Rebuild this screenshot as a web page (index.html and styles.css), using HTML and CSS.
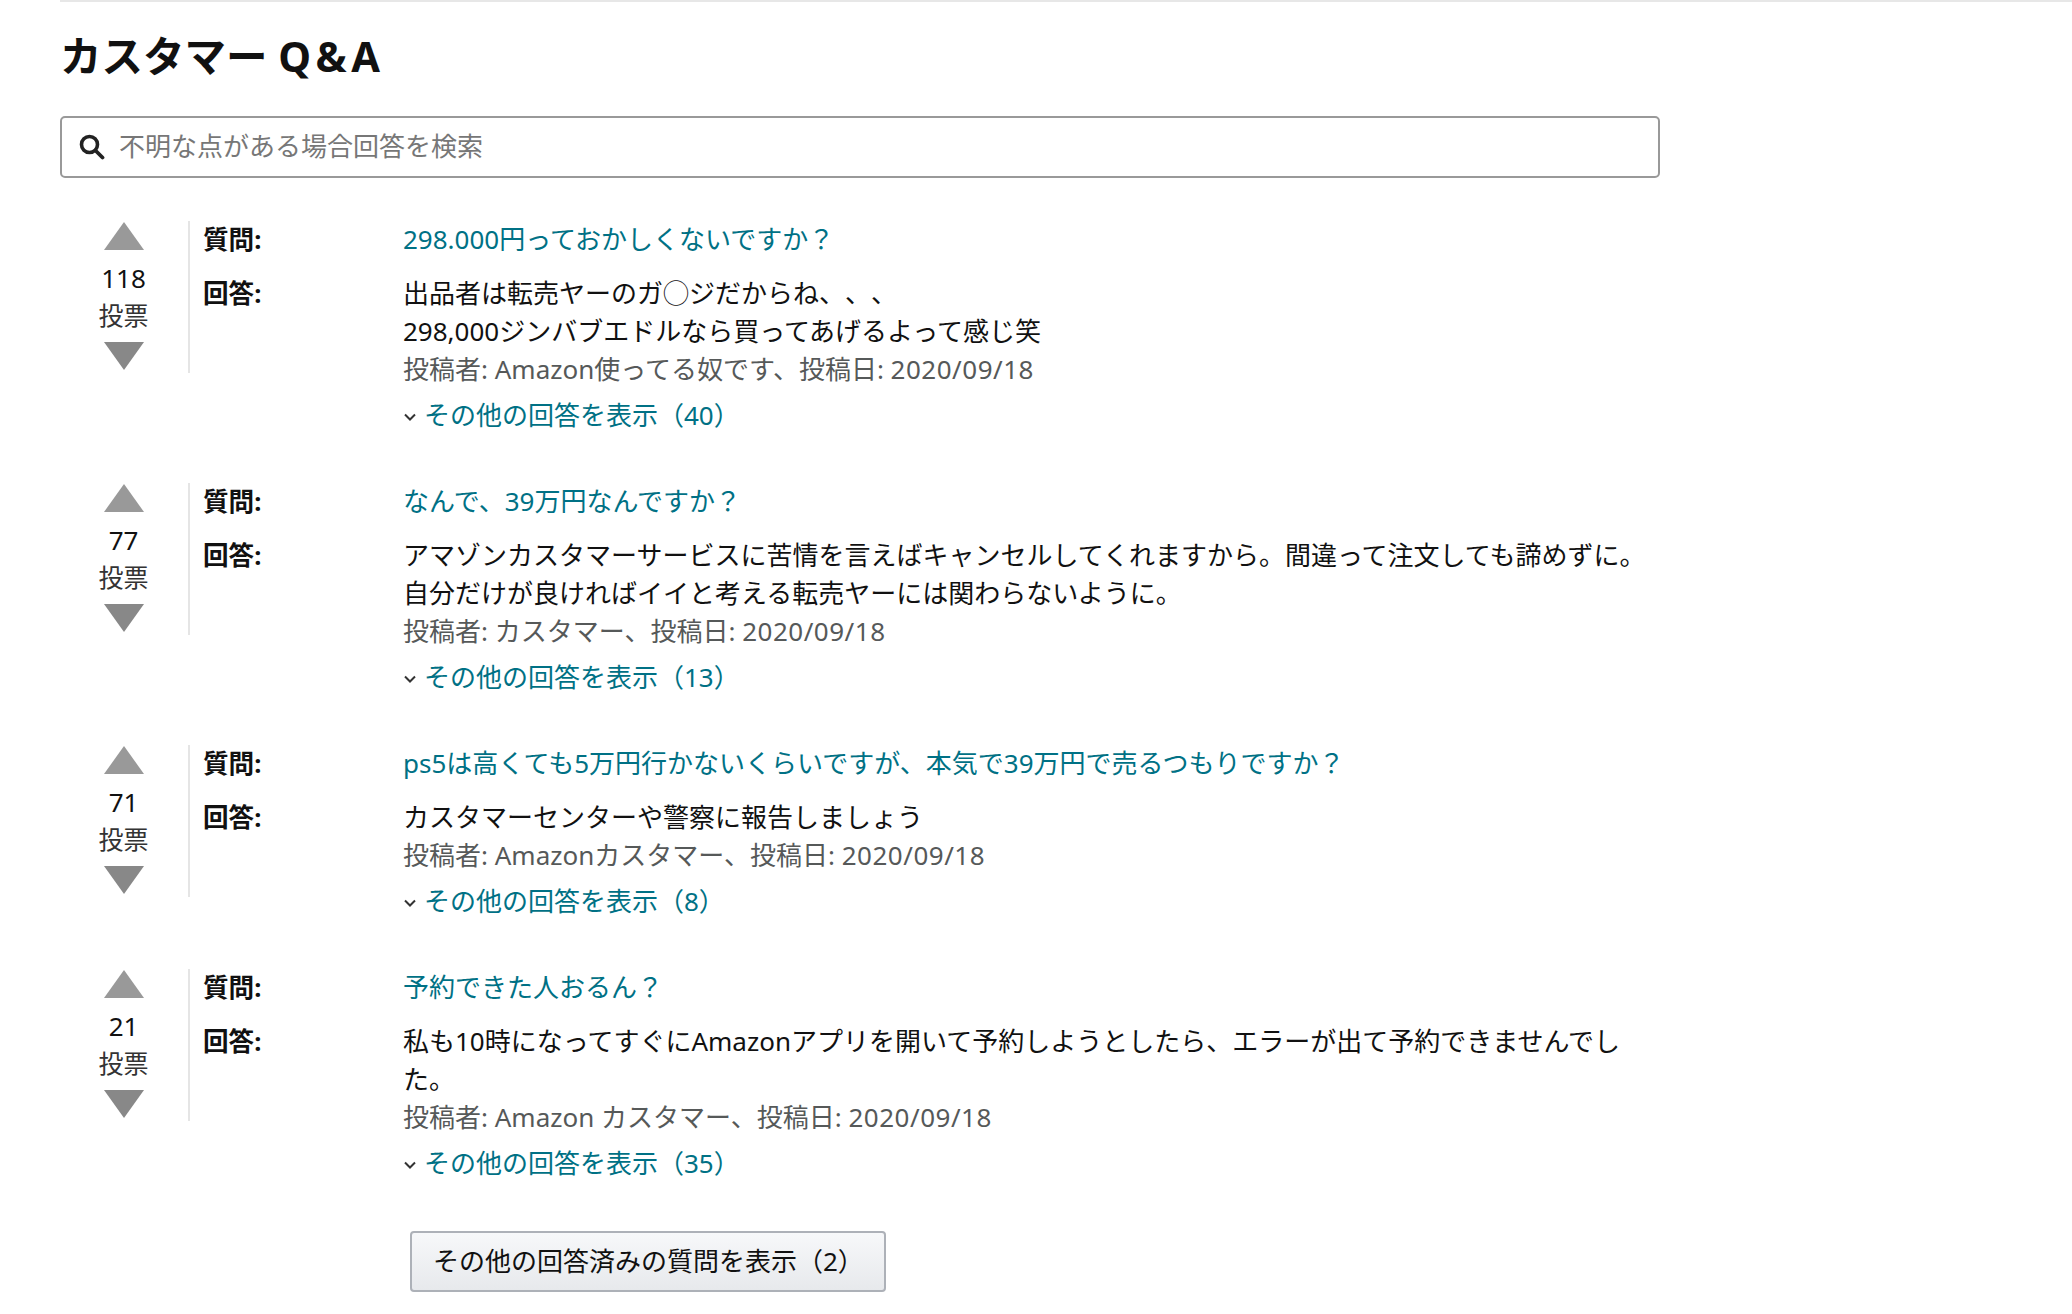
FILE: index.html
```html
<!DOCTYPE html>
<html lang="ja">
<head>
<meta charset="utf-8">
<title>カスタマー Q&amp;A</title>
<link rel="stylesheet" href="styles.css">
</head>
<body>
<main class="page">
  <h2 class="title">カスタマー <span class="title-latin">Q&amp;A</span></h2>
  <div class="search">
    <svg class="search-icon" viewBox="0 0 26 26" aria-hidden="true"><circle cx="10.5" cy="10.5" r="8" fill="none" stroke="#222" stroke-width="3.6"/><path d="M16.5 16.5l7 7" stroke="#222" stroke-width="3.8" stroke-linecap="round"/></svg>
    <span class="search-text">不明な点がある場合回答を検索</span>
  </div>
  <section class="qa">
    <div class="vote">
      <span class="tri up"></span><span class="count">118</span><span class="unit">投票</span><span class="tri down"></span>
    </div>
    <div class="body">
      <div class="line q"><b class="label">質問:</b><a class="link">298.000円っておかしくないですか？</a></div>
      <div class="line a"><b class="label">回答:</b><div class="answer">出品者は転売ヤーのガ◯ジだからね、、、<br>298,000ジンバブエドルなら買ってあげるよって感じ笑<div class="meta">投稿者: Amazon使ってる奴です、投稿日: <span class="date">2020/09/18</span></div><a class="link more"><svg class="chev" viewBox="0 0 14 10" aria-hidden="true"><path d="M2 2.5l5 5 5-5" fill="none" stroke="#333" stroke-width="2"/></svg>その他の回答を表示（40）</a></div></div>
    </div>
  </section>
  <section class="qa">
    <div class="vote">
      <span class="tri up"></span><span class="count">77</span><span class="unit">投票</span><span class="tri down"></span>
    </div>
    <div class="body">
      <div class="line q"><b class="label">質問:</b><a class="link">なんで、39万円なんですか？</a></div>
      <div class="line a"><b class="label">回答:</b><div class="answer">アマゾンカスタマーサービスに苦情を言えばキャンセルしてくれますから。間違って注文しても諦めずに。<br>自分だけが良ければイイと考える転売ヤーには関わらないように。<div class="meta">投稿者: カスタマー、投稿日: <span class="date">2020/09/18</span></div><a class="link more"><svg class="chev" viewBox="0 0 14 10" aria-hidden="true"><path d="M2 2.5l5 5 5-5" fill="none" stroke="#333" stroke-width="2"/></svg>その他の回答を表示（13）</a></div></div>
    </div>
  </section>
  <section class="qa">
    <div class="vote">
      <span class="tri up"></span><span class="count">71</span><span class="unit">投票</span><span class="tri down"></span>
    </div>
    <div class="body">
      <div class="line q"><b class="label">質問:</b><a class="link">ps5は高くても5万円行かないくらいですが、本気で39万円で売るつもりですか？</a></div>
      <div class="line a"><b class="label">回答:</b><div class="answer">カスタマーセンターや警察に報告しましょう<div class="meta">投稿者: Amazonカスタマー、投稿日: <span class="date">2020/09/18</span></div><a class="link more"><svg class="chev" viewBox="0 0 14 10" aria-hidden="true"><path d="M2 2.5l5 5 5-5" fill="none" stroke="#333" stroke-width="2"/></svg>その他の回答を表示（8）</a></div></div>
    </div>
  </section>
  <section class="qa">
    <div class="vote">
      <span class="tri up"></span><span class="count">21</span><span class="unit">投票</span><span class="tri down"></span>
    </div>
    <div class="body">
      <div class="line q"><b class="label">質問:</b><a class="link">予約できた人おるん？</a></div>
      <div class="line a"><b class="label">回答:</b><div class="answer">私も10時になってすぐにAmazonアプリを開いて予約しようとしたら、エラーが出て予約できませんでし<br>た。<div class="meta">投稿者: Amazon カスタマー、投稿日: <span class="date">2020/09/18</span></div><a class="link more"><svg class="chev" viewBox="0 0 14 10" aria-hidden="true"><path d="M2 2.5l5 5 5-5" fill="none" stroke="#333" stroke-width="2"/></svg>その他の回答を表示（35）</a></div></div>
    </div>
  </section>
  <button class="btn" type="button">その他の回答済みの質問を表示（2）</button>
</main>
</body>
</html>
```
FILE: styles.css
```css
* { box-sizing: border-box; }
html, body { margin: 0; background: #fff; }
body {
  font-family: "Noto Sans", "Noto Sans CJK JP", sans-serif;
  font-size: 26px;
  line-height: 38px;
  color: #111;
  text-spacing-trim: space-all;
}
.page {
  margin-left: 60px;
  height: 1314px;
  overflow: hidden;
  border-top: 2px solid #e7e7e7;
}
.title {
  margin: 0;
  padding-top: 24px;
  height: 114px;
  font-size: 41.5px;
  line-height: 60px;
  font-weight: 700;
}
.title-latin { letter-spacing: 4.5px; }
.search {
  display: flex;
  align-items: center;
  width: 1600px;
  height: 62px;
  margin-bottom: 43px;
  padding-left: 17px;
  border: 2px solid #999;
  border-radius: 5px;
}
.search-icon { width: 26px; height: 26px; flex: none; }
.search-text { margin: -2px 0 0 14px; color: #777; }
.qa { display: flex; align-items: flex-start; margin-bottom: 48px; }
.vote {
  display: flex;
  flex-direction: column;
  align-items: center;
  width: 130px;
  height: 152px;
  padding: 1px 1px 0 0;
  border-right: 2px solid #e5e5e5;
}
.tri { width: 0; height: 0; border-left: 20px solid transparent; border-right: 20px solid transparent; flex: none; }
.tri.up { border-bottom: 28px solid #999; }
.tri.down { border-top: 28px solid #888; }
.count, .unit { height: 38px; flex: none; }
.count { margin-top: 9px; }
.unit { margin-top: -1px; margin-bottom: 8px; color: #333; font-size: 25px; }
.body { margin-left: 13px; flex: 1; }
.line { display: flex; }
.line.a { margin-top: 16px; }
.label { width: 200px; flex: none; font-weight: 700; font-size: 25.6px; }
.link { color: #007185; }
.q .link { margin-top: -1px; }
.answer { flex: none; width: 1260px; margin: -1px 0 1px; }
.meta { color: #565959; }
.date { letter-spacing: 0.5px; }
.more { display: flex; align-items: center; margin-top: 8px; }
.chev { width: 14px; height: 10px; margin-right: 7px; flex: none; margin-top: 3px; }
.btn {
  display: block;
  width: 476px;
  height: 61px;
  margin-left: 350px;
  padding: 0 0 2px 21px;
  text-align: left;
  font: inherit;
  color: #111;
  border: 2px solid #adb1b8;
  border-radius: 4px;
  background: linear-gradient(#f7f8fa, #e7e9ec);
}
```
